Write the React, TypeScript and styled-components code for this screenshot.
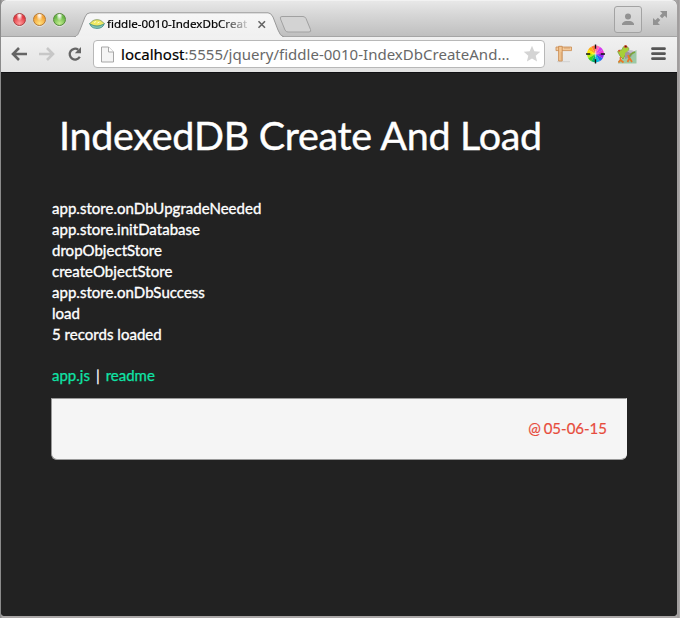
import React from 'react';
import styled, { createGlobalStyle } from 'styled-components';

const GlobalStyle = createGlobalStyle`
  * { box-sizing: border-box; }
  html, body { margin: 0; padding: 0; }
  body { background: #a4a1a1; overflow: hidden; }
  svg { display: block; flex: none; }
`;

const Desktop = styled.div`
  width: 680px;
  height: 618px;
  padding: 0 3px 2px 1px;
  background: linear-gradient(to right, #8b8b8b 0, #8b8b8b 1px, #aaa7a7 2px, #aaa7a7 677px, #9a9797 678px, #b2afaf 680px);
`;

const Window = styled.div`
  height: 616px;
  display: flex;
  flex-direction: column;
  border-radius: 5px 5px 4px 4px;
  overflow: hidden;
  background: #222;
`;

const TitleBar = styled.header`
  height: 37px;
  flex: none;
  display: flex;
  background: linear-gradient(#e8e8e8, #d6d6d6 40%, #bfbfbf);
  border-top: 1px solid #f2f2f2;
  border-bottom: 1px solid #a5a5a5;
`;

const Lights = styled.div`
  display: flex;
  gap: 7px;
  padding: 12px 0 0 12px;
  width: 73px;
  flex: none;
`;

const Light = styled.span<{ $edge: string; $mid: string; $low: string }>`
  width: 13px;
  height: 13px;
  border-radius: 50%;
  border: 1px solid ${p => p.$edge};
  background:
    radial-gradient(ellipse at 50% 10%, rgba(255,255,255,.85) 0 12%, transparent 42%),
    radial-gradient(circle at 50% 85%, ${p => p.$low}, ${p => p.$mid} 65%);
  box-shadow: 0 1px 0 rgba(255,255,255,.5);
`;

const Tab = styled.div`
  width: 210px;
  height: 25px;
  margin-top: 11px;
  flex: none;
  display: grid;
  margin-bottom: -1px;
`;

const TabShape = styled.svg`
  grid-area: 1 / 1;
`;

const TabContent = styled.div`
  grid-area: 1 / 1;
  display: flex;
  align-items: center;
  padding: 0 0 1px 15px;
  z-index: 1;
`;

const TabTitle = styled.span`
  width: 146px;
  margin-left: 2px;
  white-space: nowrap;
  font: 11.6px/18px 'Noto Sans', sans-serif;
  color: #000;
  -webkit-text-stroke: 0.2px currentColor;
  mask-image: linear-gradient(to right, #000 112px, transparent 146px);
`;

const NewTab = styled.svg`
  margin: 14px 0 0 -7px;
`;

const WindowActions = styled.div`
  margin-left: auto;
  display: flex;
  gap: 10px;
  padding: 5px 9px 0 0;
`;

const Profile = styled.div`
  width: 28px;
  height: 27px;
  border: 1px solid #a3a3a3;
  border-radius: 3px;
  display: flex;
  align-items: center;
  justify-content: center;
  background: linear-gradient(#dedede, #cecece);
`;

const FullscreenIcon = styled.svg`
  margin-top: 4px;
`;

const Toolbar = styled.nav`
  height: 35px;
  flex: none;
  display: flex;
  background: linear-gradient(#f1f1f1, #e3e3e3);
`;

const NavButtons = styled.div`
  width: 92px;
  flex: none;
  padding: 9px 0 0 10px;
  display: flex;
  gap: 12px;
`;

const AddressBar = styled.div`
  width: 452px;
  height: 28px;
  margin-top: 3px;
  flex: none;
  display: flex;
  align-items: center;
  border: 1px solid #b8b8b8;
  border-radius: 4px;
  background: #fff;
  padding: 0 3px 0 7px;
`;

const Address = styled.span`
  width: 402px;
  margin-left: 7px;
  white-space: nowrap;
  font: 15px/24px 'Noto Sans', sans-serif;
  letter-spacing: 0.02px;
  color: #686868;
  b { font-weight: 400; color: #000; -webkit-text-stroke: 0.2px currentColor; }
`;

const Extensions = styled.div`
  display: flex;
  gap: 12px;
  padding: 7px 0 0 10px;
`;

const Page = styled.main`
  flex: 1;
  border-top: 1px solid #111114;
  background: #222;
  color: #fff;
  font-family: Lato, sans-serif;
  padding: 0 50px;
`;

const Heading = styled.h1`
  margin: 0;
  padding: 37px 0 0 8px;
  font-size: 39.5px;
  line-height: 50px;
  font-weight: 400;
  letter-spacing: -0.3px;
  white-space: nowrap;
  -webkit-text-stroke: 0.4px currentColor;
`;

const Log = styled.div`
  margin: 38px 0 0 1px;
  font-size: 15px;
  line-height: 21px;
  letter-spacing: 0.03px;
  -webkit-text-stroke: 0.35px currentColor;
`;

const Links = styled.div`
  margin: 20px 0 0 1px;
  display: flex;
  gap: 6px;
  font-size: 15px;
  line-height: 21px;
  -webkit-text-stroke: 0.25px currentColor;
`;

const Link = styled.a`
  color: #0fe3a7;
`;

const Footer = styled.footer`
  width: 576px;
  height: 62px;
  margin-top: 12px;
  border: 1px solid #999;
  border-right-color: #f5f5f5;
  border-radius: 0 0 6px 6px;
  background: #f5f5f5;
  padding: 19px 19px 0;
  text-align: right;
  color: #e74c3c;
  font-size: 15px;
  line-height: 21px;
  word-spacing: -1px;
  -webkit-text-stroke: 0.2px currentColor;
`;

const logLines = [
  'app.store.onDbUpgradeNeeded',
  'app.store.initDatabase',
  'dropObjectStore',
  'createObjectStore',
  'app.store.onDbSuccess',
  'load',
  '5 records loaded',
];

const wheelColors = ['#e93bd5', '#d63cf0', '#ff6bb0', '#ff7a40', '#ffae14', '#ffe900', '#b4ef13', '#38d421', '#05b46c', '#08b9e4', '#2467f2', '#9128ee'];

const wedge = (i: number) => {
  const a = (i * Math.PI) / 6;
  const b = ((i + 1) * Math.PI) / 6;
  return `M9 9L${9 + 8 * Math.cos(a)} ${9 - 8 * Math.sin(a)}A8 8 0 0 0 ${9 + 8 * Math.cos(b)} ${9 - 8 * Math.sin(b)}Z`;
};

const PieIcon = () => (
  <svg width="16" height="12" viewBox="0 0 16 12">
    <path d="M1 5.5C3 2.8 5 1.7 8 1.7s5 1.1 7 3.8l-2 2C11 8.5 5 8.5 3 7.5Z" fill="#eee963" stroke="#7c9353" strokeWidth=".8" />
    <path d="M.7 5.5c1 2 2 .8 3.5 1.8 2 1 5.6 1 7.6 0 1.5-1 2.5.2 3.5-1.8-.8 3.6-3.8 4.9-7.3 4.9S1.7 9.2.7 5.5Z" fill="#85c7b5" stroke="#3c8987" strokeWidth=".8" />
    <path d="M5 4.5l2-1M8.5 5l2-1" stroke="#fffbd0" />
  </svg>
);

const Back = () => (
  <svg width="16" height="16" viewBox="0 0 16 16" fill="none" stroke="#656565" strokeWidth="2.6">
    <path d="M8 2L2 8l6 6M2 8h14" />
  </svg>
);

const Forward = () => (
  <svg width="16" height="16" viewBox="0 0 16 16" fill="none" stroke="#c7c7c7" strokeWidth="2.6">
    <path d="M8 2l6 6-6 6M14 8H0" />
  </svg>
);

const Reload = () => (
  <svg width="16" height="16" viewBox="0 0 16 16">
    <path d="M12.8 10.8A5.4 5.4 0 1 1 11.2 3.7" fill="none" stroke="#656565" strokeWidth="2.3" />
    <path d="M14 1v6.2H7.8Z" fill="#656565" />
  </svg>
);

const Sheet = () => (
  <svg width="13" height="17" viewBox="0 0 13 17">
    <path d="M.5 1h7l5 5v10H.5Z" fill="#f4f4f4" stroke="#a7a7a7" />
    <path d="M7.5 1v5h5" fill="#fff" stroke="#a7a7a7" />
  </svg>
);

const Star = () => (
  <svg width="18" height="18" viewBox="0 0 18 18">
    <path d="M9 .7l2.3 5.6 6 .5-4.6 3.9 1.4 5.9L9 13.4l-5.1 3.2 1.4-5.9L.7 6.8l6-.5Z" fill="#d4d4d4" />
  </svg>
);

const Rulers = () => (
  <svg width="19" height="19" viewBox="0 0 19 19">
    <path d="M2 17.7h13" stroke="#d1d1d1" />
    <path d="M1 3h15.5v3.6H1Z" fill="#f4ca9b" stroke="#c98c50" strokeWidth=".8" />
    <path d="M3.6 2.3h3.6v14.7H3.6Z" fill="#f3c693" stroke="#c5874b" strokeWidth=".8" />
    <path d="M10 3v2M12 3v2M14 3v2M5.6 9h1.6M5.6 11h1.6M5.6 13h1.6M5.6 15h1.6" stroke="#c99260" strokeWidth=".7" />
  </svg>
);

const ColorWheel = () => (
  <svg width="19" height="20" viewBox="0 0 18 18">
    {wheelColors.map((color, i) => <path key={color} d={wedge(i)} fill={color} />)}
    <path d="M9 0v4M9 14v4M0 9h4M14 9h4" stroke="#111" strokeWidth="1.3" />
    <path d="M9 6v6M6 9h6" stroke="#fff" strokeWidth=".4" />
  </svg>
);

const Frog = () => (
  <svg width="20" height="20" viewBox="0 0 20 20">
    <path d="M1 19.5V17L8 13l11.5-7v13.5Z" fill="#9cc9a4" />
    <path d="M.7 7.5C2 5.5 4 7 5.5 5 6 2 8.5 1 10 3c2 .2 2 2 1.5 4L9 10l-3 5-3-3Z" fill="#a7cf38" stroke="#6d9638" strokeWidth=".7" />
    <path d="M8 9l4-2.5 5 1-3 5.5-6 2Z" fill="#a2949e" />
    <path d="M10 7c3-1 6-1 8 1l-5 1Z" fill="#c5bccb" />
    <path d="M12 14c1-4 3-5 6-6" fill="none" stroke="#79a539" strokeWidth="1.6" />
    <path d="M3.5 13v4M3.5 16l-2 2.5M3.5 16l3 2.5M11 11l1.5 4M12.5 14l-2 4M12.5 14l2.5 4" fill="none" stroke="#e97828" strokeWidth="1.7" />
    <circle cx="8.7" cy="2.5" r="1.6" fill="#d34428" />
    <circle cx="8.8" cy="2.4" r=".7" fill="#38221d" />
    <circle cx="2.2" cy="6.8" r="1" fill="#da512d" />
  </svg>
);

const BrowserTab = () => (
  <Tab>
    <TabShape width="210" height="25" viewBox="0 0 210 25">
      <defs><linearGradient id="tab-fill" x2="0" y2="1"><stop stopColor="#f7f7f7" /><stop offset="1" stopColor="#f0f0f0" /></linearGradient></defs>
      <path d="M0 25C4 24 4 22 6 18L11 5Q12.5.8 16 .8H194Q197 .8 199 5L204 18Q206 24 210 25Z" fill="url(#tab-fill)" stroke="#999" />
      <path d="M2 25h206" stroke="#f1f1f1" strokeWidth="2" />
    </TabShape>
    <TabContent>
      <PieIcon />
      <TabTitle>fiddle-0010-IndexDbCreat</TabTitle>
      <svg width="17" height="11" viewBox="0 0 17 11"><path d="M5.5 2.3l6.5 6.5M12 2.3L5.5 8.8" stroke="#656565" strokeWidth="1.6" /></svg>
    </TabContent>
  </Tab>
);

export default function App() {
  return (
    <>
      <GlobalStyle />
      <Desktop>
        <Window>
          <TitleBar>
            <Lights>
              <Light $edge="#ac4143" $mid="#e33b43" $low="#ff9b9b" />
              <Light $edge="#b57a35" $mid="#f2a337" $low="#ffe17e" />
              <Light $edge="#56883b" $mid="#69b847" $low="#c3ec8e" />
            </Lights>
            <BrowserTab />
            <NewTab width="36" height="20" viewBox="0 0 36 20">
              <path d="M5 1.5h21q2 0 3 2l4.5 11q1 2.5-1.5 2.5H11q-2 0-3-2L3.5 4Q2.5 1.5 5 1.5Z" fill="#d3d3d3" stroke="#a1a1a1" />
            </NewTab>
            <WindowActions>
              <Profile>
                <svg width="14" height="13" viewBox="0 0 14 13" fill="#929292"><circle cx="7" cy="3.5" r="3" /><path d="M1 12V10.8C2 8.5 4 8 7 8s5 .5 6 2.8V12Z" /></svg>
              </Profile>
              <FullscreenIcon width="16" height="16" viewBox="0 0 16 16" fill="#929292">
                <path d="M8 1h7v7l-2.3-2.3-2.6 2.6-2.4-2.4 2.6-2.6ZM8 15H1V8l2.3 2.3 2.6-2.6 2.4 2.4-2.6 2.6Z" />
              </FullscreenIcon>
            </WindowActions>
          </TitleBar>
          <Toolbar>
            <NavButtons><Back /><Forward /><Reload /></NavButtons>
            <AddressBar>
              <Sheet />
              <Address><b>localhost</b>:5555/jquery/fiddle-0010-IndexDbCreateAnd...</Address>
              <Star />
            </AddressBar>
            <Extensions>
              <Rulers /><ColorWheel /><Frog />
              <svg width="18" height="19" viewBox="0 0 18 19"><path d="M3.5 4.7h12M3.5 9.7h12M3.5 14.7h12" stroke="#555" strokeWidth="2.8" strokeLinecap="round" /></svg>
            </Extensions>
          </Toolbar>
          <Page>
            <Heading>IndexedDB Create And Load</Heading>
            <Log>{logLines.map(line => <div key={line}>{line}</div>)}</Log>
            <Links><Link>app.js</Link><span>|</span><Link>readme</Link></Links>
            <Footer>@ 05-06-15</Footer>
          </Page>
        </Window>
      </Desktop>
    </>
  );
}
